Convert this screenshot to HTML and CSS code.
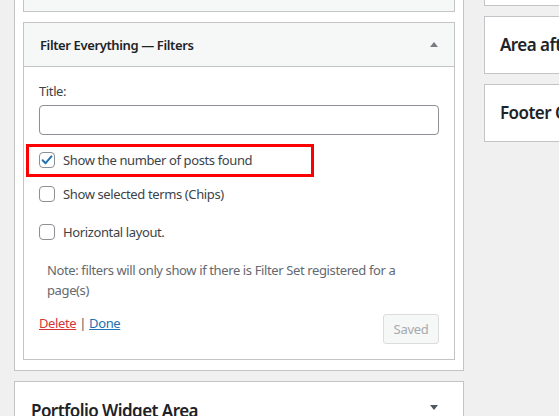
FILE: index.html
```html
<!DOCTYPE html>
<html>
<head>
<meta charset="utf-8">
<link rel="stylesheet" href="styles.css">
</head>
<body>
<div class="page">
  <div class="left-col">
    <div class="area area-open">
      <div class="widget widget-prev"></div>
      <div class="widget">
        <div class="widget-top">
          <h3 class="widget-title">Filter Everything — Filters</h3>
          <span class="arrow arrow-up"></span>
        </div>
        <div class="widget-inside">
          <label class="field-label">Title:</label>
          <input class="text-input" type="text">
          <div class="check-row row-1 highlighted">
            <span class="checkbox checked">
              <svg viewBox="0 0 16 16" width="16" height="16"><path d="M3.6 8.3 L6.6 11.2 L12.4 4.4" fill="none" stroke="#2271b1" stroke-width="2" stroke-linecap="round" stroke-linejoin="round"/></svg>
            </span>
            <span class="check-label">Show the number of posts found</span>
          </div>
          <div class="check-row row-2">
            <span class="checkbox"></span>
            <span class="check-label">Show selected terms (Chips)</span>
          </div>
          <div class="check-row row-3">
            <span class="checkbox"></span>
            <span class="check-label">Horizontal layout.</span>
          </div>
          <p class="note">Note: filters will only show if there is Filter Set registered for a page(s)</p>
          <div class="actions">
            <div class="links"><a class="link-delete" href="#">Delete</a><span class="sep"> | </span><a class="link-done" href="#">Done</a></div>
            <button class="btn-saved" disabled>Saved</button>
          </div>
        </div>
      </div>
    </div>
    <div class="area area-closed">
      <h2 class="area-title">Portfolio Widget Area</h2>
      <span class="arrow arrow-down"></span>
    </div>
  </div>
  <div class="right-col">
    <div class="side-card side-card-prev"></div>
    <div class="side-card"><h2 class="area-title">Area after content</h2></div>
    <div class="side-card"><h2 class="area-title">Footer Column 1</h2></div>
  </div>
</div>
</body>
</html>
```
FILE: styles.css
```css
*, *::before, *::after { box-sizing: border-box; }
html, body { margin: 0; padding: 0; }
body {
  background: #f0f0f1;
  font-family: "Noto Sans", "Open Sans", sans-serif;
  color: #3c434a;
  width: 559px;
  height: 416px;
  overflow: hidden;
}
.page {
  display: flex;
  gap: 20px;
  padding-left: 14px;
  align-items: flex-start;
}
.left-col {
  width: 450px;
  flex: none;
  display: flex;
  flex-direction: column;
  gap: 10px;
}
.area {
  background: #fff;
  border: 1px solid #c3c4c7;
}
.area-open {
  border-top: none;
  padding: 0 8px 10px;
}
.widget {
  border: 1px solid #c3c4c7;
  background: #fff;
  margin-top: 10px;
}
.widget-prev {
  margin-top: 0;
  border-top: none;
  height: 12px;
  background: #f6f7f7;
}
.widget-top {
  height: 44px;
  background: #f6f7f7;
  border-bottom: 1px solid #c3c4c7;
  display: flex;
  align-items: center;
  justify-content: space-between;
  padding: 0 16px 0 16px;
}
.widget-title {
  margin: 0;
  font-size: 13px;
  font-weight: 600;
  color: #1d2327;
  letter-spacing: -0.38px;
}
.arrow {
  width: 0;
  height: 0;
  border-left: 4px solid transparent;
  border-right: 4px solid transparent;
}
.arrow-up { border-bottom: 5px solid #787c82; }
.arrow-down { border-top: 5px solid #50575e; }
.widget-inside {
  padding: 14px 15px 15px;
  font-size: 13px;
  letter-spacing: -0.38px;
}
.field-label {
  display: block;
  line-height: 20px;
  height: 20px;
}
.text-input {
  display: block;
  width: 100%;
  height: 30px;
  margin-top: 4px;
  border: 1px solid #8c8f94;
  border-radius: 4px;
  background: #fff;
}
.check-row {
  display: flex;
  align-items: center;
  gap: 8px;
  height: 20px;
  line-height: 20px;
}
.row-1 { margin-top: 15px; }
.row-2 { margin-top: 14px; }
.row-3 { margin-top: 18px; }
.highlighted { position: relative; }
.highlighted::after {
  content: "";
  position: absolute;
  left: -13px;
  top: -6px;
  width: 288px;
  height: 33px;
  border: 3px solid #ff0000;
}
.checkbox {
  width: 16px;
  height: 16px;
  flex: none;
  border: 1px solid #8c8f94;
  border-radius: 4px;
  background: #fff;
  display: flex;
  align-items: center;
  justify-content: center;
}
.checkbox svg { display: block; margin: -1px; }
.check-label { color: #3c434a; }
.note {
  margin: 18px 0 0;
  padding: 0 8px;
  line-height: 20px;
  color: #646970;
}
.actions {
  margin-top: 13px;
  display: flex;
  justify-content: space-between;
  align-items: flex-start;
}
.links { line-height: 20px; }
.link-delete { color: #d63638; }
.link-done { color: #2271b1; }
.sep { color: #50575e; }
.btn-saved {
  margin-top: 1px;
  height: 30px;
  width: 56px;
  padding: 0;
  font-family: inherit;
  font-size: 13px;
  letter-spacing: -0.3px;
  color: #a7aaad;
  background: #f6f7f7;
  border: 1px solid #dcdcde;
  border-radius: 3px;
}
.area-closed {
  height: 60px;
  display: flex;
  justify-content: space-between;
  align-items: flex-start;
  padding: 17px 25px 0 16px;
}
.area-closed .arrow-down { margin-top: 6px; }
.area-title {
  margin: 0;
  font-size: 17px;
  font-weight: 600;
  color: #1d2327;
  line-height: 24px;
  letter-spacing: -0.55px;
  white-space: nowrap;
}
.right-col {
  width: 300px;
  flex: none;
  display: flex;
  flex-direction: column;
  gap: 10px;
}
.side-card {
  background: #fff;
  border: 1px solid #c3c4c7;
  height: 58px;
  display: flex;
  align-items: center;
  padding: 0 15px;
}
.side-card-prev {
  border-top: none;
  height: 6px;
}
```
